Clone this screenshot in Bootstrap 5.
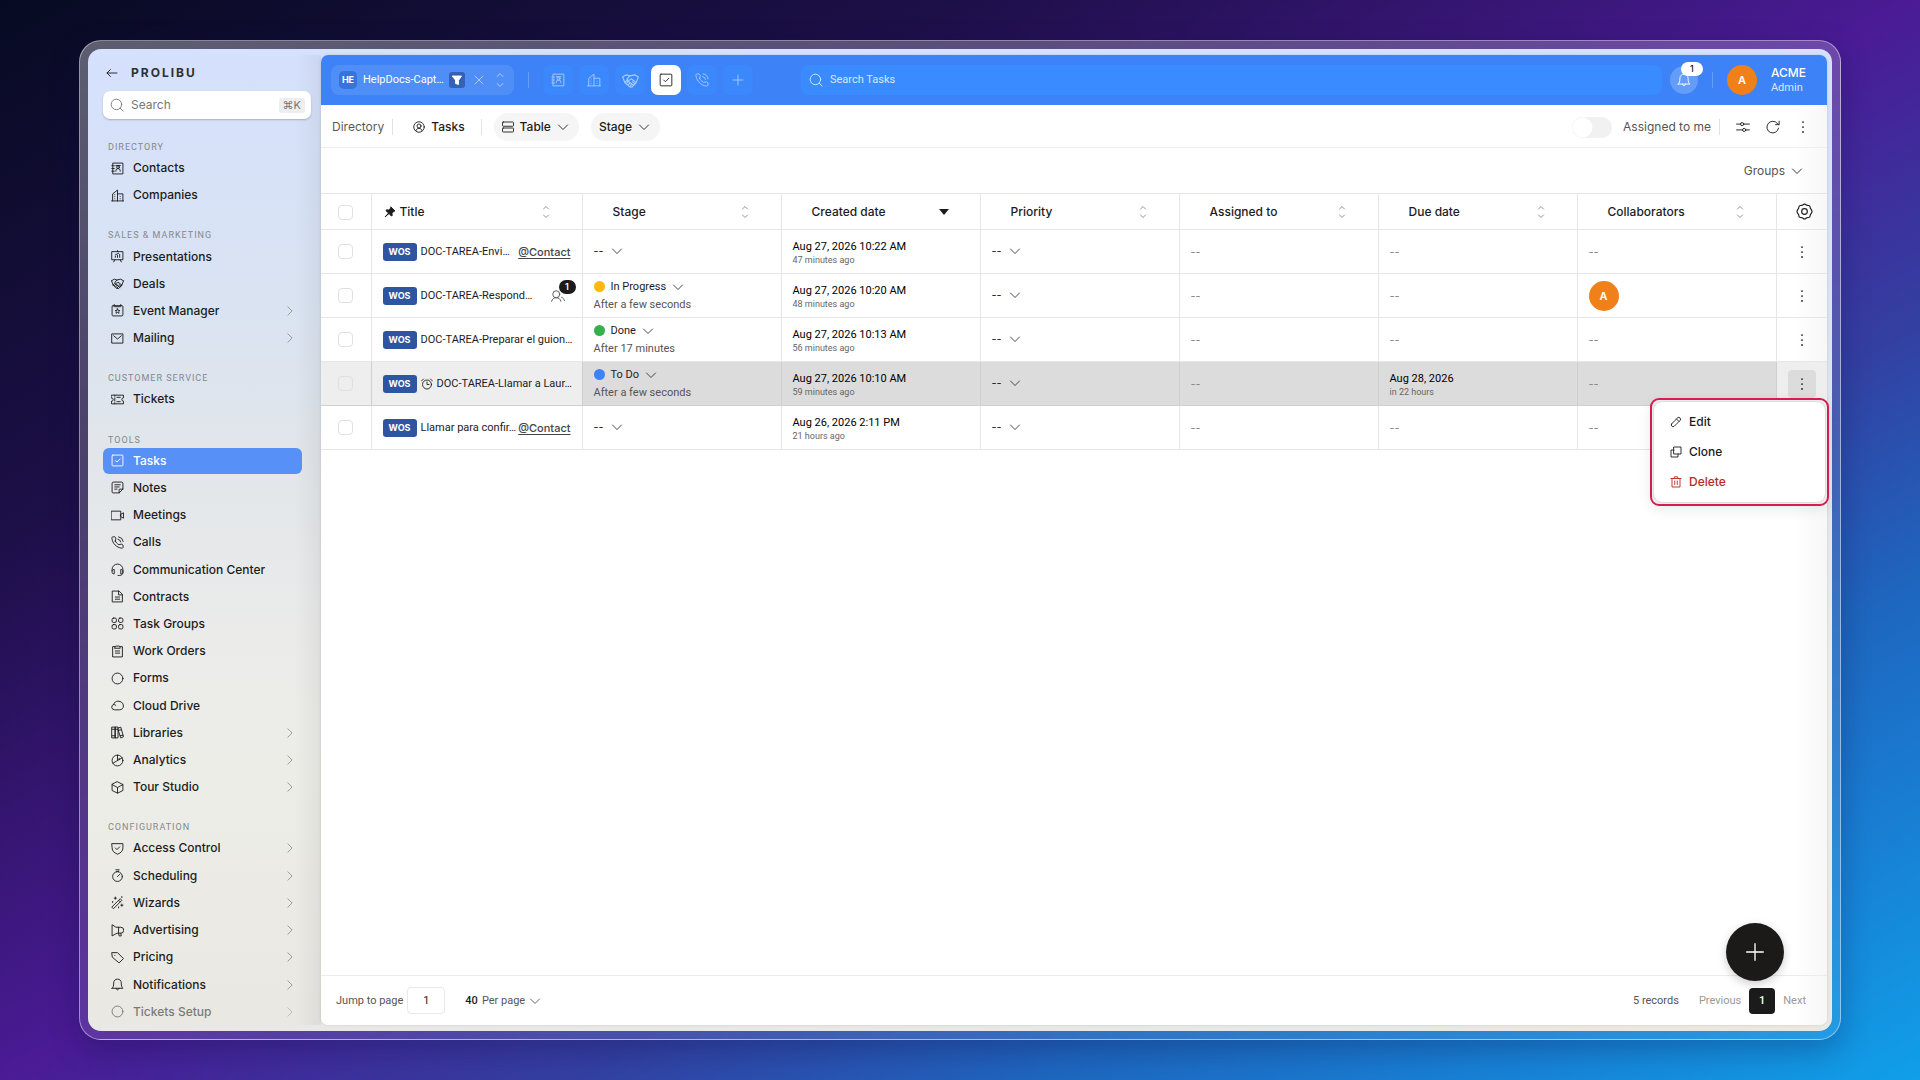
<!DOCTYPE html>
<html lang="en">
<head>
<meta charset="utf-8">
<meta name="viewport" content="width=device-width, initial-scale=1">
<title>Prolibu – Tasks</title>
<link href="https://cdn.jsdelivr.net/npm/bootstrap@5.3.0/dist/css/bootstrap.min.css" rel="stylesheet">
<style>
:root{--line:#e6e6e6;--ink:#1c1c1c;--soft:#555;--blue:#3d82f6}
body{font-family:Inter,"Liberation Sans",sans-serif;font-size:12px;line-height:16px;color:var(--ink);
 background:linear-gradient(to bottom right,#070b22 0,#1d0f48 25%,#4a1b95 50%,#3340a2 65%,#1e66bf 77%,#1785d8 90%,#109fe8 100%) fixed}
svg.ico{width:14px;height:14px;fill:none;stroke:currentColor;stroke-width:1.6;stroke-linecap:round;stroke-linejoin:round;flex:none;display:block}
svg.ico.sm{width:12px;height:12px;stroke-width:1.8}
svg.ico.lg{width:17px;height:17px}
button{font:inherit;color:inherit}
.plainbtn{background:none;border:0;padding:0;display:inline-flex;align-items:center}
.stage-area{padding:40px 79px}
.device{border:1px solid rgba(255,255,255,.45);border-radius:22px;padding:8px;
 background:linear-gradient(165deg,rgba(255,255,255,.34) 0,rgba(255,255,255,.22) 25%,rgba(255,255,255,.12) 60%,rgba(255,255,255,.07) 100%);
 box-shadow:0 10px 30px rgba(10,10,60,.28)}
.app{border-radius:13px;padding:6px 5px 6px 0;background:linear-gradient(180deg,#d5e1fd 0,#d9e3f2 25%,#e2e6ea 42%,#ebebea 60%,#edede7 75%,#e9e8e3 100%)}
.side{width:233px;padding:0 10px 0 15px;background:linear-gradient(to left,rgba(60,60,60,.07) 0,rgba(60,60,60,0) 26px)}
.brandrow{height:36px;padding-left:3px;gap:13px}
.wordmark{font-weight:700;font-size:12px;letter-spacing:2px;color:#2c2f33}
.sidesearch{height:28px;background:#fff;border-radius:7px;box-shadow:0 1px 2px rgba(0,0,0,.22);padding:0 6px 0 7px;gap:7px;color:#777}
.sidesearch input,.topsearch input{border:0;background:none;outline:0;padding:0;width:100%;font:inherit;color:inherit}
.sidesearch input::placeholder{color:#777;opacity:1}
.sidesearch kbd{background:#eee;color:#777;font-family:Inter,sans-serif;font-size:11px;line-height:15px;padding:0 4px;border-radius:3px}
.sidenav{margin:19px 9px 0 0}
.sidenav h2{font-family:Roboto,sans-serif;font-size:9px;line-height:16px;height:34px;padding:19px 0 0 5px;margin:0;letter-spacing:1px;font-weight:400;color:#84888d;text-transform:uppercase}
.sidenav h2:first-child{height:16px;padding-top:1px}
.sidenav a{flex:1 1 24px;min-height:24px;display:flex;align-items:center;gap:9px;padding:0 7px 0 8px;color:var(--ink);text-decoration:none;font-weight:500;border-radius:6px;margin-top:1px}
.sidenav a .ico{width:13px;height:13px;stroke-width:1.7}
.sidenav a .go{margin-left:auto;width:10px;height:10px;color:#8b8b8b;stroke-width:2}
.sidenav a.on{background:#5790f7;color:#fff}
.sidenav a.fading{opacity:.55}
.panel{border-radius:7px;background:linear-gradient(to left,#f7f7f7 0,#fff 34px);box-shadow:0 0 3px rgba(0,0,0,.12)}
.topbar{height:50px;background:var(--blue);border-radius:7px 7px 0 0;color:#fff;padding:0 21px 0 10px;font-family:Roboto,Inter,sans-serif;font-size:11px}
.tabchip{height:30px;width:183px;border-radius:8px;background:rgba(255,255,255,.1);padding:0 7px 0 8px}
.tabchip .he{width:18px;height:18px;border-radius:5px;background:#3673dd;font:700 9px/18px Inter,sans-serif;text-align:center;margin-right:6px}
.tabchip .acts{color:#b5d1ff}
.tabchip .flt{width:16px;height:16px;border-radius:3px;background:#3560b8;justify-content:center;color:#fff}
.vr1{width:1px;height:16px;background:#e3e3e3;flex:none}
.topbar .vr1{background:rgba(255,255,255,.22);margin:0 14px}
.quick{gap:6px}
.quick button{width:30px;height:30px;border-radius:7px;background:#3a88fb;justify-content:center;color:#a9cbff}
.quick button.on{background:#fff;color:#222}
.topsearch{height:30px;border-radius:8px;background:#3a8bff;padding:0 10px 0 8px;gap:7px;color:#d8e7ff}
.topsearch input::placeholder{color:#d8e7ff;opacity:1}
.bell{width:28px;height:28px;border-radius:50%;background:#649cf9;justify-content:center;position:relative}
.bell span{position:absolute;left:11px;top:-4px;width:22px;height:14px;border-radius:7px;background:#fff;color:#222;font:500 9px/14px Inter,sans-serif}
.face{width:30px;height:30px;border-radius:50%;background:#f0811a;color:#fff;font:600 11px/30px Inter,sans-serif;text-align:center;flex:none}
.who{margin-left:14px}
.who b{font:500 12px/16px Inter,sans-serif;display:block}
.who span{font-size:11px;line-height:14px;display:block;color:#d8e7ff}
.tools{height:43px;border-bottom:1px solid #eee;padding:2px 17px 0 11px}
.crumb{font-weight:500;gap:6px}
.pill{height:28px;border-radius:14px;background:#f5f5f5;padding:0 10px 0 8px;gap:6px;font-weight:500}
.switchy.form-switch{padding:0;min-height:0;margin:0;gap:11px;color:var(--soft)}
.switchy .form-check-input{width:40px;height:21px;margin:0;float:none;border:0;background-color:#f1f1f1;--bs-form-switch-bg:url("data:image/svg+xml,%3csvg xmlns='http://www.w3.org/2000/svg' viewBox='-4 -4 8 8'%3e%3ccircle r='3.8' fill='%23fff'/%3e%3c/svg%3e")}
.groups{height:45px;padding-right:24px}
.groups button{gap:6px;color:var(--soft)}
.groups .ico{color:var(--ink)}
table.grid{table-layout:fixed;width:100%;border-collapse:collapse;border-top:1px solid var(--line);font-family:Roboto,Inter,sans-serif;font-size:11px}
.grid th{height:36px;border-right:1px solid var(--line);border-bottom:1px solid var(--line);font:500 12px/16px Inter,sans-serif;padding:0 30px}
.grid th.first-data{padding-left:12px}
.grid .srt{color:#888}
.grid td{height:44px;border-right:1px solid var(--line);border-bottom:1px solid var(--line);padding:0 11px;white-space:nowrap}
.grid th:last-child,.grid td:last-child{border-right:0}
.grid .c1{width:50px;padding:0;text-align:center}
.grid .c2{width:211px}
.grid .c9{width:51px;padding:0}
.grid th.c9{padding-left:6px}
.tick.form-check-input{width:15px;height:15px;margin:0;border:1px solid #e0e0e0;border-radius:4px;float:none;vertical-align:middle;background-color:transparent}
.wos{background:#3055a0;color:#fff;font:700 9px/18px Inter,sans-serif;width:34px;height:18px;border-radius:3px;text-align:center;flex:none;margin-right:4px}
.at{font:500 11px/16px Inter,sans-serif;color:#444;text-decoration:underline;text-underline-offset:2px;margin-left:auto}
.dot{width:11px;height:11px;border-radius:50%;flex:none}
.dot-prog{background:#fbb80f}.dot-done{background:#35b04a}.dot-todo{background:#3d82f6}
.when{line-height:15px;color:#000;padding-top:1px}
.ago{font-size:9px;line-height:12px;color:#666}
.stg .plainbtn{gap:6px;display:flex;line-height:18px}
.stg small{display:block;font-size:11px;line-height:18px;color:var(--soft)}
.nil{color:#888;font-family:Inter,sans-serif}
.pick{gap:7px;font-family:Inter,sans-serif}
.pick .ico,.stg .ico{color:#333}
.hover td{background:#dcdcdc;border-color:#cfcfcf}
.hover td.c1,.hover td.c2c,.hover td.c9{background:#eee}
.more{width:28px;height:28px;border-radius:4px;justify-content:center}
.hover .more{background:#dcdcdc}
.people{position:relative;margin-left:auto;margin-right:6px;color:#555}
.people span{position:absolute;left:8px;top:-9px;width:17px;height:14px;border-radius:7px;background:#1b1b1b;color:#fff;font:600 9px/14px Inter,sans-serif;text-align:center}
.ctx{position:absolute;z-index:5;right:-2px;top:36px;border:2px solid #d81b52;border-radius:9px;padding:2px;background:#f1f1f1;width:179px;box-shadow:0 4px 14px rgba(0,0,0,.08)}
.ctx ul{list-style:none;margin:0;padding:5px 0;background:#fff;border-radius:8px;box-shadow:0 0 2px rgba(0,0,0,.3)}
.ctx button{height:30px;width:100%;padding:0 16px;gap:7px;font:500 12px/16px Inter,sans-serif}
.ctx .danger{color:#b8291c}
.foot{height:50px;border-top:1px solid #ececec;padding:0 21px 0 15px;font-family:Roboto,Inter,sans-serif;font-size:11px;color:var(--soft);position:relative}
.foot input{width:38px;height:27px;border:1px solid #e8e8e8;border-radius:4px;text-align:center;font:inherit;color:var(--ink);background:#fff}
.foot b{font-weight:500;color:var(--ink)}
.faint{color:#999}
.pg{width:26px;height:26px;border-radius:4px;background:#1b1b1b;color:#fff;justify-content:center;font-weight:500}
.fab{position:absolute;right:43px;top:-53px;width:58px;height:58px;border-radius:50%;background:#1b1a19;color:#fff;justify-content:center;box-shadow:0 3px 10px rgba(0,0,0,.2)}
.fab svg.ico{width:20px;height:20px;stroke-width:1.6}
</style>
<script src="https://cdn.jsdelivr.net/npm/bootstrap@5.3.0/dist/js/bootstrap.bundle.min.js"></script>
</head>
<body>
<svg class="d-none" aria-hidden="true">
<symbol id="i-back" viewBox="0 0 24 24"><path d="M22 12H2M9 5l-7 7 7 7"/></symbol>
<symbol id="i-search" viewBox="0 0 24 24"><circle cx="11" cy="11" r="9"/><path d="m17.500 17.500 5 5"/></symbol>
<symbol id="i-go" viewBox="0 0 24 24"><path d="m7 2 10 10L7 22"/></symbol>
<symbol id="i-down" viewBox="0 0 24 24"><path d="m3 8 9 9 9-9"/></symbol>
<symbol id="i-sort" viewBox="0 0 24 24"><path d="m7 6 5-5 5 5M7 18l5 5 5-5"/></symbol>
<symbol id="i-contact" viewBox="0 0 24 24"><path d="M4 2h18v20H4zM1.500 7H6M1.500 12H6M1.500 17H6"/><circle cx="13" cy="9.500" r="2.500"/><path d="M9 17v-1a4 4 0 0 1 8 0v1M9 6.500h8"/></symbol>
<symbol id="i-company" viewBox="0 0 24 24"><path d="M1 22h22M3 22V9l9-7v20M12 9h10v13M7 10v.1M7 14v.1M7 18v.1M17 14v.1M17 18v.1"/></symbol>
<symbol id="i-present" viewBox="0 0 24 24"><path d="M2 3h20v15H2zM12 1v2M7 18l-2 4M17 18l2 4M8 13.500v-2M12 13.500V10M16 13.500V8M8 9l6-3"/></symbol>
<symbol id="i-deal" viewBox="0 0 24 24"><path d="M1 7l5-3 5 1.500M1 7l3 8M23 7l-5-3-7 1.500L7 10c1 2.500 4 2 6-.5l7 5.500M23 7l-3 8M4 15l2.500-3 2.500 1.500M6 16.500l3-3 2.500 1.500M8.500 18.500l3-3.500 2.500 2M4 15l7 6 2-3M11 21l3 .5 6-6.500M15 14l3.500 3M13 16l3.500 3"/></symbol>
<symbol id="i-event" viewBox="0 0 24 24"><rect x="2" y="3" width="20" height="19" rx="2"/><path d="M6 1v4M18 1v4M8 5h8M12 9l1.300 2.700 3 .4-2.200 2 .6 3-2.700-1.500-2.700 1.500.6-3-2.200-2 3-.4z"/></symbol>
<symbol id="i-mail" viewBox="0 0 24 24"><path d="M2 3.500h20v17H2zM5 7l7 6 7-6"/></symbol>
<symbol id="i-ticket" viewBox="0 0 24 24"><path d="M1 4h22v5a3 3 0 0 0 0 6v5H1v-5a3 3 0 0 0 0-6zM7 4v2M7 9v6M7 18v2M11 8h6M11 16h6"/></symbol>
<symbol id="i-task" viewBox="0 0 24 24"><rect x="2" y="2" width="20" height="20" rx="1.500"/><path d="m8 12 3 3 6-6"/></symbol>
<symbol id="i-note" viewBox="0 0 24 24"><path d="M15 22H4a2 2 0 0 1-2-2V4c0-1 1-2 2-2h16c1 0 2 1 2 2v11l-7 7v-6c0-.6.400-1 1-1h6M7 7h10M7 11h8M7 15h4"/></symbol>
<symbol id="i-video" viewBox="0 0 24 24"><path d="M1 4h17v16H1zM18 10l5-3v10l-5-3z"/></symbol>
<symbol id="i-phone" viewBox="0 0 24 24"><path d="M8 9.500 9 4 7 1.500H3.500C2 1.500 1.500 3 1.700 4.500 3 14 10 21 19.500 22.500c1.500.2 2.800-.5 2.800-2V17l-2.500-2-5.300 1C11 14 9.500 12 8 9.500zM13 6a6 6 0 0 1 5 5M14 1.500a10 10 0 0 1 8.500 8.500"/></symbol>
<symbol id="i-headset" viewBox="0 0 24 24"><path d="M2 14v-2a10 10 0 0 1 20 0v6c0 3-3 5-6 5h-3M2 14c0-1 1-2 4-2v8c-3 0-4-1-4-2zM22 14c0-1-1-2-4-2v8c3 0 4-1 4-2z"/></symbol>
<symbol id="i-file" viewBox="0 0 24 24"><path d="M3 2h12l6 6v14H3zM14 2v7h7M8 13h8M8 17h8"/></symbol>
<symbol id="i-four" viewBox="0 0 24 24"><rect x="2" y="2" width="8" height="8" rx="2.500"/><rect x="14" y="2" width="8" height="8" rx="2.500"/><rect x="2" y="14" width="8" height="8" rx="2.500"/><rect x="14" y="14" width="8" height="8" rx="2.500"/></symbol>
<symbol id="i-clip" viewBox="0 0 24 24"><path d="M7 3H3v19h18V3h-4M7 5l1.500-3h7L17 5v1H7zM8 11h8M8 15h8"/></symbol>
<symbol id="i-ring" viewBox="0 0 24 24"><circle cx="12" cy="12" r="10"/></symbol>
<symbol id="i-cloud" viewBox="0 0 24 24"><path d="M6 20a5 5 0 0 1-1-9.800C6 6 9 4 13 4c5 0 10 3 10 9 0 4-3 7-7 7zM5 10.200c2 0 3 .8 4 1.800"/></symbol>
<symbol id="i-books" viewBox="0 0 24 24"><path d="M2 2h6v20H2zM8 2h5v20H8zM2 6h11M2 18h6M13 4l5-2 5 18-5 2-5-15M14 8l5-1M17 18l5-1"/></symbol>
<symbol id="i-pie" viewBox="0 0 24 24"><circle cx="12" cy="12" r="10"/><path d="M12 2v10L3.500 17M12 12l9-5M15 10.500V8"/></symbol>
<symbol id="i-cube" viewBox="0 0 24 24"><path d="m12 1.500 10 5v11l-10 5-10-5v-11zM2 6.500l10 5.500 10-5.500M12 12v10"/></symbol>
<symbol id="i-shield" viewBox="0 0 24 24"><path d="M2 3h20v8c0 6-4 9-10 11.500C6 20 2 17 2 11zM8 11l3 3 5-5"/></symbol>
<symbol id="i-timer" viewBox="0 0 24 24"><circle cx="12" cy="14" r="9"/><path d="M9 1.500h6M12 14l4-4M10 5l4-1"/></symbol>
<symbol id="i-wand" viewBox="0 0 24 24"><path d="M2 20 17 5l3 3L5 23zM14 8l3 3M8 2v4M6 4h4M20 15v4M18 17h4M20 1v2M3 10v2M14 20v2"/></symbol>
<symbol id="i-horn" viewBox="0 0 24 24"><path d="M2 2v20l9-5h7a5 5 0 0 0 0-11H10zM14 6v11l1 5h4l-1-5"/></symbol>
<symbol id="i-tag" viewBox="0 0 24 24"><path d="M2 3h10l11 11-8 8L3 12zM7 8v.1"/></symbol>
<symbol id="i-bell" viewBox="0 0 24 24"><path d="M2 19h20c-2-2-3-4-3-10 0-4-3-7-7-7S5 5 5 9c0 6-1 8-3 10zM9.500 19c0 4 5 4 5 0"/></symbol>
<symbol id="i-x" viewBox="0 0 24 24"><path d="m4 4 16 16M20 4 4 20"/></symbol>
<symbol id="i-plus" viewBox="0 0 24 24"><path d="M12 2v20M2 12h20"/></symbol>
<symbol id="i-funnel" viewBox="0 0 24 24"><path fill="currentColor" d="M3 4h18l-6 9v8l-6-2v-6z"/></symbol>
<symbol id="i-user" viewBox="0 0 24 24"><circle cx="12" cy="12" r="10.500"/><circle cx="12" cy="10" r="4"/><path d="M6 19c1-6 11-6 12 0"/></symbol>
<symbol id="i-rows" viewBox="0 0 24 24"><rect x="1" y="2" width="22" height="8.500" rx="1.500"/><rect x="1" y="14" width="22" height="8" rx="1.500"/></symbol>
<symbol id="i-sliders" viewBox="0 0 24 24"><path d="M1 7h7M13.500 7H23M1 17h10M17 17h6"/><circle cx="10.500" cy="7" r="2.700"/><circle cx="14" cy="17" r="2.700"/></symbol>
<symbol id="i-reload" viewBox="0 0 24 24"><path d="M21.500 14A10 10 0 1 1 19.500 6l2.500 2M22.500 2v6h-6"/></symbol>
<symbol id="i-dots" viewBox="0 0 24 24"><path stroke-width="3" d="M12 3.500v.1M12 12v.1M12 20.500v.1"/></symbol>
<symbol id="i-gear" viewBox="0 0 24 24"><circle cx="12" cy="12" r="4"/><path d="M9.800 2.500c1.400-1.300 3-1.300 4.400 0l1.300.9 2.500.1c1 .2 2 1.500 2 2.500l.3 1.700 1.500 2c.9 1.400.9 3.200 0 4.600l-1.500 2-.3 1.700c0 1-1 2.300-2 2.500l-2.500.1-1.300.9c-1.400 1.300-3 1.300-4.400 0l-1.300-.9-2.500-.1c-1-.2-2-1.500-2-2.500l-.3-1.700-1.500-2c-.9-1.400-.9-3.200 0-4.600l1.500-2L4 6c0-1 1-2.300 2-2.500l2.500-.1z"/></symbol>
<symbol id="i-pin" viewBox="0 0 24 24"><path fill="currentColor" d="m14 2 8 8-3 1-3 4 .5 4-2 1-4.500-5L2 22l7-8-5-4.500 1-2 4 .5 4-3z"/></symbol>
<symbol id="i-people" viewBox="0 0 24 24"><circle cx="9" cy="9" r="6"/><path d="M1 21c1-4 4-6 8-6s7 2 8 6M18 14c3 1 4 3 5 6"/></symbol>
<symbol id="i-alarm" viewBox="0 0 24 24"><circle cx="12" cy="13" r="9"/><path d="M12 8v5h4M1 6l4-4M23 6l-4-4"/></symbol>
<symbol id="i-pen" viewBox="0 0 24 24"><path d="M3 16 16 3c2-2 7 3 5 5L8 21c-3 2-7-2-5-5zM13 6l5 5"/></symbol>
<symbol id="i-copy" viewBox="0 0 24 24"><path d="M8 2h14v14H8zM8 8H2v14h14v-6"/></symbol>
<symbol id="i-bin" viewBox="0 0 24 24"><path d="M2 5h20M4 5v17h16V5M8 5l1-3.500h6L16 5M9.500 10v7M14.500 10v7"/></symbol>
</svg>

<div class="stage-area vh-100 d-flex">
<div class="device flex-fill d-flex">
<div class="app flex-fill d-flex">

<aside class="side d-flex flex-column flex-shrink-0">
 <div class="brandrow d-flex align-items-center"><button class="plainbtn" aria-label="Back"><svg class="ico sm"><use href="#i-back"/></svg></button><span class="wordmark">PROLIBU</span></div>
 <label class="sidesearch d-flex align-items-center"><svg class="ico"><use href="#i-search"/></svg><input type="search" placeholder="Search" aria-label="Search"><kbd>⌘K</kbd></label>
 <nav class="sidenav flex-fill d-flex flex-column">
  <h2>Directory</h2>
  <a href="#"><svg class="ico"><use href="#i-contact"/></svg>Contacts</a>
  <a href="#"><svg class="ico"><use href="#i-company"/></svg>Companies</a>
  <h2>Sales &amp; Marketing</h2>
  <a href="#"><svg class="ico"><use href="#i-present"/></svg>Presentations</a>
  <a href="#"><svg class="ico"><use href="#i-deal"/></svg>Deals</a>
  <a href="#"><svg class="ico"><use href="#i-event"/></svg>Event Manager<svg class="ico go"><use href="#i-go"/></svg></a>
  <a href="#"><svg class="ico"><use href="#i-mail"/></svg>Mailing<svg class="ico go"><use href="#i-go"/></svg></a>
  <h2>Customer Service</h2>
  <a href="#"><svg class="ico"><use href="#i-ticket"/></svg>Tickets</a>
  <h2>Tools</h2>
  <a href="#" class="on"><svg class="ico"><use href="#i-task"/></svg>Tasks</a>
  <a href="#"><svg class="ico"><use href="#i-note"/></svg>Notes</a>
  <a href="#"><svg class="ico"><use href="#i-video"/></svg>Meetings</a>
  <a href="#"><svg class="ico"><use href="#i-phone"/></svg>Calls</a>
  <a href="#"><svg class="ico"><use href="#i-headset"/></svg>Communication Center</a>
  <a href="#"><svg class="ico"><use href="#i-file"/></svg>Contracts</a>
  <a href="#"><svg class="ico"><use href="#i-four"/></svg>Task Groups</a>
  <a href="#"><svg class="ico"><use href="#i-clip"/></svg>Work Orders</a>
  <a href="#"><svg class="ico"><use href="#i-ring"/></svg>Forms</a>
  <a href="#"><svg class="ico"><use href="#i-cloud"/></svg>Cloud Drive</a>
  <a href="#"><svg class="ico"><use href="#i-books"/></svg>Libraries<svg class="ico go"><use href="#i-go"/></svg></a>
  <a href="#"><svg class="ico"><use href="#i-pie"/></svg>Analytics<svg class="ico go"><use href="#i-go"/></svg></a>
  <a href="#"><svg class="ico"><use href="#i-cube"/></svg>Tour Studio<svg class="ico go"><use href="#i-go"/></svg></a>
  <h2>Configuration</h2>
  <a href="#"><svg class="ico"><use href="#i-shield"/></svg>Access Control<svg class="ico go"><use href="#i-go"/></svg></a>
  <a href="#"><svg class="ico"><use href="#i-timer"/></svg>Scheduling<svg class="ico go"><use href="#i-go"/></svg></a>
  <a href="#"><svg class="ico"><use href="#i-wand"/></svg>Wizards<svg class="ico go"><use href="#i-go"/></svg></a>
  <a href="#"><svg class="ico"><use href="#i-horn"/></svg>Advertising<svg class="ico go"><use href="#i-go"/></svg></a>
  <a href="#"><svg class="ico"><use href="#i-tag"/></svg>Pricing<svg class="ico go"><use href="#i-go"/></svg></a>
  <a href="#"><svg class="ico"><use href="#i-bell"/></svg>Notifications<svg class="ico go"><use href="#i-go"/></svg></a>
  <a href="#" class="fading"><svg class="ico"><use href="#i-ring"/></svg>Tickets Setup<svg class="ico go"><use href="#i-go"/></svg></a>
 </nav>
</aside>

<main class="panel flex-fill d-flex flex-column">
 <header class="topbar d-flex align-items-center">
  <div class="tabchip d-flex align-items-center flex-shrink-0"><span class="he">HE</span><span class="text-nowrap">HelpDocs-Capt…</span>
   <div class="acts d-flex align-items-center gap-2 ms-auto"><button class="plainbtn flt" aria-label="Filter"><svg class="ico sm"><use href="#i-funnel"/></svg></button><button class="plainbtn" aria-label="Close"><svg class="ico sm"><use href="#i-x"/></svg></button><button class="plainbtn" aria-label="Switch"><svg class="ico"><use href="#i-sort"/></svg></button></div></div>
  <span class="vr1"></span>
  <div class="quick d-flex flex-shrink-0 me-5">
   <button class="plainbtn" aria-label="Contacts"><svg class="ico"><use href="#i-contact"/></svg></button>
   <button class="plainbtn" aria-label="Companies"><svg class="ico"><use href="#i-company"/></svg></button>
   <button class="plainbtn" aria-label="Deals"><svg class="ico lg"><use href="#i-deal"/></svg></button>
   <button class="plainbtn on" aria-label="Tasks"><svg class="ico"><use href="#i-task"/></svg></button>
   <button class="plainbtn" aria-label="Calls"><svg class="ico"><use href="#i-phone"/></svg></button>
   <button class="plainbtn" aria-label="Add"><svg class="ico sm"><use href="#i-plus"/></svg></button>
  </div>
  <label class="topsearch flex-fill d-flex align-items-center me-2"><svg class="ico"><use href="#i-search"/></svg><input type="search" placeholder="Search Tasks" aria-label="Search Tasks"></label>
  <button class="plainbtn bell flex-shrink-0" aria-label="Notifications"><svg class="ico"><use href="#i-bell"/></svg><span>1</span></button>
  <span class="vr1"></span>
  <span class="face">A</span>
  <div class="who"><b>ACME</b><span>Admin</span></div>
 </header>

 <div class="tools d-flex align-items-center">
  <a href="#" class="text-decoration-none text-reset opacity-75">Directory</a>
  <span class="vr1 ms-2 me-3"></span>
  <span class="crumb d-flex align-items-center ms-1"><svg class="ico sm"><use href="#i-user"/></svg>Tasks</span>
  <span class="vr1 ms-3 me-2"></span>
  <button class="plainbtn pill ms-1 me-2"><svg class="ico sm"><use href="#i-rows"/></svg>Table<svg class="ico sm"><use href="#i-down"/></svg></button>
  <button class="plainbtn pill ms-1">Stage<svg class="ico sm"><use href="#i-down"/></svg></button>
  <div class="form-check form-switch switchy d-flex align-items-center ms-auto"><input class="form-check-input" type="checkbox" role="switch" id="mine"><label for="mine">Assigned to me</label></div>
  <span class="vr1 ms-2 me-3"></span>
  <button class="plainbtn me-3" aria-label="Settings"><svg class="ico"><use href="#i-sliders"/></svg></button>
  <button class="plainbtn me-3" aria-label="Reload"><svg class="ico"><use href="#i-reload"/></svg></button>
  <button class="plainbtn" aria-label="More"><svg class="ico"><use href="#i-dots"/></svg></button>
 </div>
 <div class="groups d-flex align-items-center justify-content-end"><button class="plainbtn">Groups<svg class="ico sm"><use href="#i-down"/></svg></button></div>

 <div class="flex-fill">
 <table class="grid">
  <thead><tr>
   <th class="c1"><input class="form-check-input tick" type="checkbox" aria-label="Select all"></th>
   <th class="c2 first-data"><div class="d-flex align-items-center"><svg class="ico sm me-1"><use href="#i-pin"/></svg>Title<svg class="ico sm srt ms-auto"><use href="#i-sort"/></svg></div></th>
   <th><div class="d-flex align-items-center">Stage<svg class="ico sm srt ms-auto"><use href="#i-sort"/></svg></div></th>
   <th><div class="d-flex align-items-center">Created date<svg class="ico sm ms-auto" viewBox="0 0 12 12"><path fill="currentColor" stroke="none" d="M1 3h10L6 9z"/></svg></div></th>
   <th><div class="d-flex align-items-center">Priority<svg class="ico sm srt ms-auto"><use href="#i-sort"/></svg></div></th>
   <th><div class="d-flex align-items-center">Assigned to<svg class="ico sm srt ms-auto"><use href="#i-sort"/></svg></div></th>
   <th><div class="d-flex align-items-center">Due date<svg class="ico sm srt ms-auto"><use href="#i-sort"/></svg></div></th>
   <th><div class="d-flex align-items-center">Collaborators<svg class="ico sm srt ms-auto"><use href="#i-sort"/></svg></div></th>
   <th class="c9"><button class="plainbtn d-flex mx-auto" aria-label="Columns"><svg class="ico lg"><use href="#i-gear"/></svg></button></th>
  </tr></thead>
  <tbody>
  <tr>
   <td class="c1"><input class="form-check-input tick" type="checkbox" aria-label="Select row"></td>
   <td class="c2c"><div class="d-flex align-items-center"><span class="wos">WOS</span>DOC-TAREA-Envi…<a href="#" class="at">@Contact</a></div></td>
   <td><button class="plainbtn pick">--<svg class="ico sm"><use href="#i-down"/></svg></button></td>
   <td><div class="when">Aug 27, 2026 10:22 AM</div><div class="ago">47 minutes ago</div></td>
   <td><button class="plainbtn pick">--<svg class="ico sm"><use href="#i-down"/></svg></button></td>
   <td class="nil">--</td><td class="nil">--</td><td class="nil">--</td>
   <td class="c9"><button class="plainbtn more d-flex mx-auto" aria-label="Row menu"><svg class="ico"><use href="#i-dots"/></svg></button></td>
  </tr>
  <tr>
   <td class="c1"><input class="form-check-input tick" type="checkbox" aria-label="Select row"></td>
   <td class="c2c"><div class="d-flex align-items-center"><span class="wos">WOS</span>DOC-TAREA-Respond…<span class="people"><svg class="ico"><use href="#i-people"/></svg><span>1</span></span></div></td>
   <td><div class="stg"><button class="plainbtn"><i class="dot dot-prog"></i>In Progress<svg class="ico sm"><use href="#i-down"/></svg></button><small>After a few seconds</small></div></td>
   <td><div class="when">Aug 27, 2026 10:20 AM</div><div class="ago">48 minutes ago</div></td>
   <td><button class="plainbtn pick">--<svg class="ico sm"><use href="#i-down"/></svg></button></td>
   <td class="nil">--</td><td class="nil">--</td><td><div class="face">A</div></td>
   <td class="c9"><button class="plainbtn more d-flex mx-auto" aria-label="Row menu"><svg class="ico"><use href="#i-dots"/></svg></button></td>
  </tr>
  <tr>
   <td class="c1"><input class="form-check-input tick" type="checkbox" aria-label="Select row"></td>
   <td class="c2c"><div class="d-flex align-items-center"><span class="wos">WOS</span>DOC-TAREA-Preparar el guion…</div></td>
   <td><div class="stg"><button class="plainbtn"><i class="dot dot-done"></i>Done<svg class="ico sm"><use href="#i-down"/></svg></button><small>After 17 minutes</small></div></td>
   <td><div class="when">Aug 27, 2026 10:13 AM</div><div class="ago">56 minutes ago</div></td>
   <td><button class="plainbtn pick">--<svg class="ico sm"><use href="#i-down"/></svg></button></td>
   <td class="nil">--</td><td class="nil">--</td><td class="nil">--</td>
   <td class="c9"><button class="plainbtn more d-flex mx-auto" aria-label="Row menu"><svg class="ico"><use href="#i-dots"/></svg></button></td>
  </tr>
  <tr class="hover">
   <td class="c1"><input class="form-check-input tick" type="checkbox" aria-label="Select row"></td>
   <td class="c2c"><div class="d-flex align-items-center"><span class="wos">WOS</span><svg class="ico sm me-1"><use href="#i-alarm"/></svg>DOC-TAREA-Llamar a Laur…</div></td>
   <td><div class="stg"><button class="plainbtn"><i class="dot dot-todo"></i>To Do<svg class="ico sm"><use href="#i-down"/></svg></button><small>After a few seconds</small></div></td>
   <td><div class="when">Aug 27, 2026 10:10 AM</div><div class="ago">59 minutes ago</div></td>
   <td><button class="plainbtn pick">--<svg class="ico sm"><use href="#i-down"/></svg></button></td>
   <td class="nil">--</td><td><div class="when">Aug 28, 2026</div><div class="ago">in 22 hours</div></td><td class="nil">--</td>
   <td class="c9 position-relative"><button class="plainbtn more d-flex mx-auto" aria-label="Row menu" aria-expanded="true"><svg class="ico"><use href="#i-dots"/></svg></button>
    <div class="ctx"><ul>
     <li><button class="plainbtn"><svg class="ico sm"><use href="#i-pen"/></svg>Edit</button></li>
     <li><button class="plainbtn"><svg class="ico sm"><use href="#i-copy"/></svg>Clone</button></li>
     <li><button class="plainbtn danger"><svg class="ico sm"><use href="#i-bin"/></svg>Delete</button></li>
    </ul></div></td>
  </tr>
  <tr>
   <td class="c1"><input class="form-check-input tick" type="checkbox" aria-label="Select row"></td>
   <td class="c2c"><div class="d-flex align-items-center"><span class="wos">WOS</span>Llamar para confir…<a href="#" class="at">@Contact</a></div></td>
   <td><button class="plainbtn pick">--<svg class="ico sm"><use href="#i-down"/></svg></button></td>
   <td><div class="when">Aug 26, 2026 2:11 PM</div><div class="ago">21 hours ago</div></td>
   <td><button class="plainbtn pick">--<svg class="ico sm"><use href="#i-down"/></svg></button></td>
   <td class="nil">--</td><td class="nil">--</td><td class="nil">--</td>
   <td class="c9"></td>
  </tr>
  </tbody>
 </table>
 </div>

 <footer class="foot d-flex align-items-center">
  <label for="jump" class="me-1">Jump to page</label><input id="jump" type="text" value="1">
  <button class="plainbtn ms-3 gap-1 ps-1"><b>40</b> Per page <svg class="ico sm"><use href="#i-down"/></svg></button>
  <span class="ms-auto me-3">5 records</span>
  <button class="plainbtn faint me-2 ms-1">Previous</button><button class="plainbtn pg me-2">1</button><button class="plainbtn faint">Next</button>
  <button class="plainbtn fab" aria-label="New task"><svg class="ico"><use href="#i-plus"/></svg></button>
 </footer>
</main>

</div></div></div>
</body>
</html>
